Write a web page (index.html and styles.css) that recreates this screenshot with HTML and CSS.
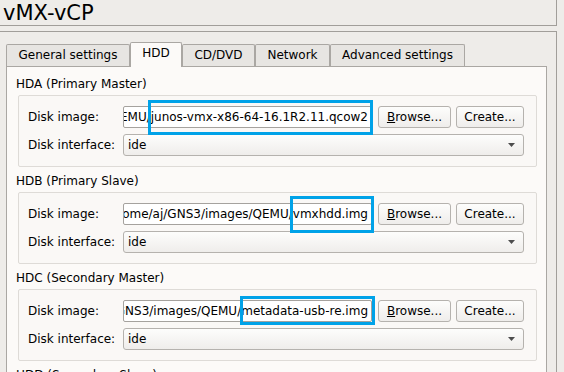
FILE: index.html
```html
<!DOCTYPE html>
<html>
<head>
    <title>vMX-vCP</title>
    <link rel="stylesheet" href="styles.css">
</head>
<body>
    <div class="title-frame">
        <div class="title">vMX-vCP</div>
    </div>

    <div class="main-frame">
        <div class="tabs">
            <div class="tab tab-general">General settings</div>
            <div class="tab tab-hdd active">HDD</div>
            <div class="tab tab-cd">CD/DVD</div>
            <div class="tab tab-net">Network</div>
            <div class="tab tab-adv">Advanced settings</div>
        </div>

        <div class="pane">
            <div class="group-title">HDA (Primary Master)</div>
            <div class="group">
                <div class="label">Disk image:</div>
                <div class="row">
                    <div class="field-wrap">
                        <div class="field"><span>/home/aj/GNS3/images/QEMU/junos-vmx-x86-64-16.1R2.11.qcow2</span></div>
                        <div class="mark mark-a"></div>
                    </div>
                    <button class="button browse"><u>B</u>rowse...</button>
                    <button class="button create">Create...</button>
                </div>
                <div class="label">Disk interface:</div>
                <div class="combo">
                    <span>ide</span>
                    <svg width="7" height="4" viewBox="0 0 7 4"><path d="M0 0h7L3.5 4z" fill="#4d4d4d"/></svg>
                </div>
            </div>

            <div class="group-title">HDB (Primary Slave)</div>
            <div class="group">
                <div class="label">Disk image:</div>
                <div class="row">
                    <div class="field-wrap">
                        <div class="field"><span>/home/aj/GNS3/images/QEMU/vmxhdd.img</span></div>
                        <div class="mark mark-b"></div>
                    </div>
                    <button class="button browse"><u>B</u>rowse...</button>
                    <button class="button create">Create...</button>
                </div>
                <div class="label">Disk interface:</div>
                <div class="combo">
                    <span>ide</span>
                    <svg width="7" height="4" viewBox="0 0 7 4"><path d="M0 0h7L3.5 4z" fill="#4d4d4d"/></svg>
                </div>
            </div>

            <div class="group-title">HDC (Secondary Master)</div>
            <div class="group">
                <div class="label">Disk image:</div>
                <div class="row">
                    <div class="field-wrap">
                        <div class="field"><span>/home/aj/GNS3/images/QEMU/metadata-usb-re.img</span></div>
                        <div class="mark mark-c"></div>
                    </div>
                    <button class="button browse"><u>B</u>rowse...</button>
                    <button class="button create">Create...</button>
                </div>
                <div class="label">Disk interface:</div>
                <div class="combo">
                    <span>ide</span>
                    <svg width="7" height="4" viewBox="0 0 7 4"><path d="M0 0h7L3.5 4z" fill="#4d4d4d"/></svg>
                </div>
            </div>

            <div class="group-title">HDD (Secondary Slave)</div>
            <div class="group"></div>
        </div>
    </div>
</body>
</html>
```

FILE: styles.css
```css
body {
    margin: 0;
    height: 372px;
    overflow: hidden;
    background: #eeece9;
    font-family: "DejaVu Sans", sans-serif;
    font-size: 12px;
    color: #000;
}
.title-frame {
    width: 556px;
    height: 25px;
    border-right: 1px solid #a19e9a;
    border-bottom: 1px solid #a19e9a;
}
.title {
    padding: 2px 0 0 3px;
    font-size: 21px;
    line-height: 23px;
}
.main-frame {
    width: 541px;
    height: 400px;
    margin-top: 5px;
    padding: 10px 9px 0 6px;
    border-top: 1px solid #a19e9a;
    border-right: 1px solid #a19e9a;
}
.tabs {
    display: flex;
    align-items: flex-end;
    height: 24px;
}
.tab {
    height: 21px;
    line-height: 21px;
    text-align: center;
    border: 1px solid #aaa7a3;
    border-bottom: none;
    border-radius: 2px 2px 0 0;
    background: #e7e5e2;
    white-space: nowrap;
}
.tab-general { width: 122px; }
.tab-hdd { width: 50px; }
.tab-cd { width: 71px; }
.tab-net { width: 73px; }
.tab-adv { width: 133px; }
.tab.active {
    position: relative;
    z-index: 1;
    height: 23px;
    line-height: 21px;
    padding-bottom: 1px;
    margin-bottom: -1px;
    background: #fcfaf8;
}
.pane {
    height: 400px;
    padding: 10px 9px 0 9px;
    border: 1px solid #aaa7a3;
    background: #fcfaf8;
}
.group-title {
    line-height: 14px;
    margin-bottom: 4px;
}
.group {
    display: grid;
    grid-template-columns: 95px minmax(0, 1fr);
    row-gap: 6px;
    align-items: center;
    margin: 0 0 7px 2px;
    padding: 10px 12px 10px 9px;
    border: 1px solid #dedbd7;
    border-radius: 2px;
    background: #faf8f6;
}
.group:empty {
    height: 40px;
}
.label {
    line-height: 22px;
    white-space: nowrap;
}
.row {
    display: flex;
    min-width: 0;
}
.field-wrap {
    position: relative;
    flex: 1;
    min-width: 0;
}
.field {
    display: flex;
    justify-content: flex-end;
    height: 20px;
    line-height: 20px;
    padding: 0 3px;
    border: 1px solid #a5a29e;
    border-radius: 2px;
    background: #fff;
    overflow: hidden;
    white-space: nowrap;
}
.field span {
    flex-shrink: 0;
}
.mark {
    position: absolute;
    border: 3px solid #00a2e8;
}
.mark-a {
    left: 25px;
    top: -6px;
    width: 219px;
    height: 29px;
}
.mark-b {
    left: 167px;
    top: -7px;
    width: 78px;
    height: 31px;
}
.mark-c {
    left: 117px;
    top: -4px;
    width: 129px;
    height: 23px;
}
.button {
    flex-shrink: 0;
    height: 22px;
    padding: 0;
    font-family: "DejaVu Sans", sans-serif;
    font-size: 12px;
    color: #000;
    border: 1px solid #b5b2ae;
    border-radius: 3px;
    background: linear-gradient(#fdfdfc, #efedeb);
}
.browse {
    width: 73px;
    margin-left: 6px;
}
.create {
    width: 68px;
    margin-left: 5px;
}
.combo {
    display: flex;
    align-items: center;
    justify-content: space-between;
    height: 20px;
    padding: 0 8px 0 4px;
    border: 1px solid #b5b2ae;
    border-radius: 3px;
    background: linear-gradient(#fdfdfc, #efedeb);
}
```
